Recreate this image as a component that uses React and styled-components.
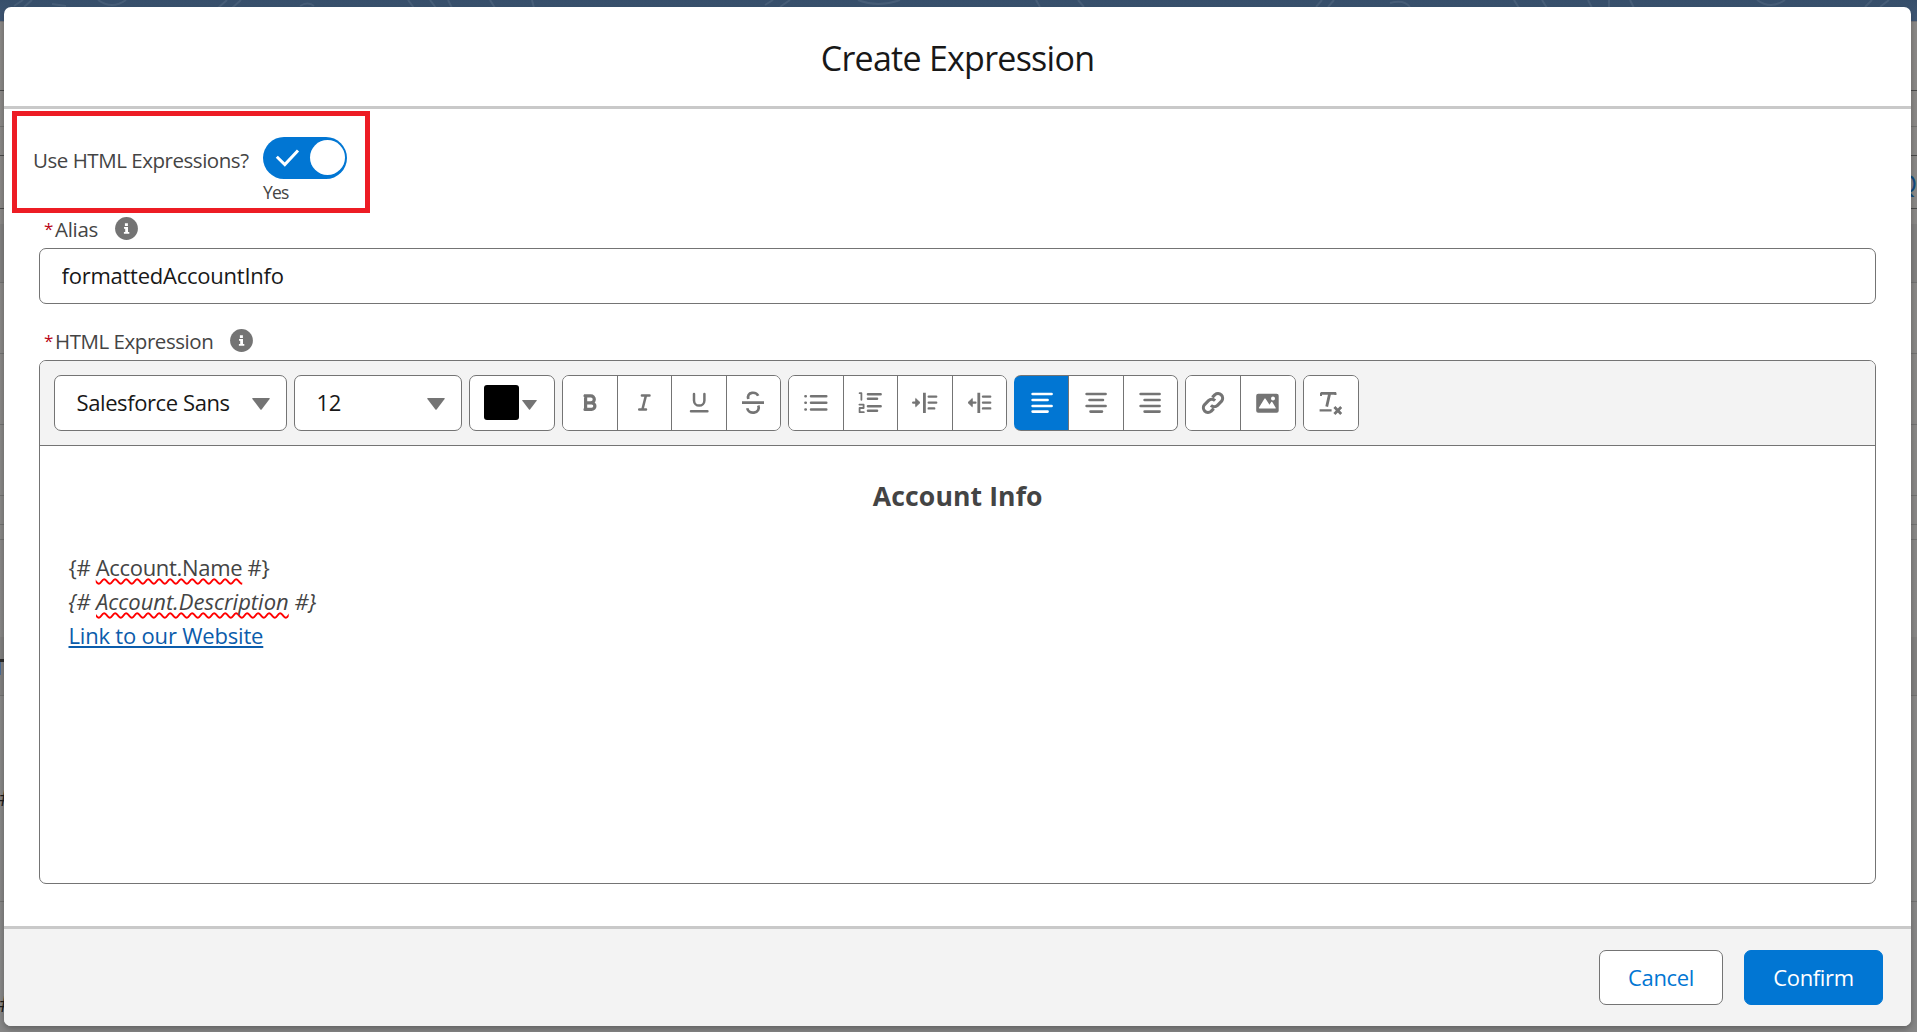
import React from "react";
import styled, { createGlobalStyle, css } from "styled-components";

const Global = createGlobalStyle`
  * { box-sizing: border-box; }
  html, body { margin: 0; padding: 0; }
  body {
    width: 100vw; height: 100vh; overflow: hidden;
    font-family: "Open Sans", "Noto Sans", sans-serif;
    color: #444; background: #8b8b8a;
  }
  button, input { font-family: inherit; margin: 0; }
`;

const Page = styled.div`
  position: relative;
  height: 100vh;
  overflow: hidden;
`;
const PageBehind = styled.div`
  display: flex;
  flex-direction: column;
  height: 100%;
  background: linear-gradient(#8b8987, #878787);
`;
const BrandStrip = styled.div`
  flex: none;
  height: 22px;
  background: linear-gradient(#364e6a, #405876);
  border-bottom: 1px solid #76767a;
  svg { display: block; }
`;
const Band = styled.div`
  flex: none;
  display: flex;
  justify-content: space-between;
  align-items: flex-end;
  height: ${(p) => p.$h}px;
  border-bottom: 1px solid ${(p) => p.$color || "#737372"};
  background: ${(p) => (p.$shade ? "#828180" : "transparent")};
  white-space: nowrap;
`;
const TabMark = styled.span`
  align-self: flex-start;
  width: 4px;
  height: 16px;
  border-top: 3px solid #2b2b2b;
  background: linear-gradient(90deg, #4a6a94 1px, transparent 1px);
`;
const Hash = styled.span`
  font-size: 21px;
  line-height: 20px;
  color: #1b1b1b;
  margin-left: -1px;
  padding-bottom: ${(p) => p.$up}px;
`;
const Peek = styled.span`
  margin-left: auto;
  margin-right: 0;
  padding-bottom: 12px;
  font-size: 25px;
  line-height: 26px;
  color: #0f4a80;
`;

const Modal = styled.section`
  position: absolute;
  left: 4px;
  top: 7px;
  width: 1907px;
  height: 1019px;
  display: flex;
  flex-direction: column;
  border-radius: 7px;
  overflow: hidden;
  background: #fff;
  box-shadow: 0 3px 6px rgba(0, 0, 0, 0.28);
`;
const Header = styled.header`
  flex: none;
  height: 102px;
  padding-top: 2px;
  border-bottom: 3px solid #c9c9c9;
  display: flex;
  align-items: center;
  justify-content: center;
`;
const Title = styled.h2`
  margin: 0;
  font-size: 34px;
  font-weight: 400;
  line-height: 44px;
  letter-spacing: -0.74px;
  color: #181818;
`;
const Body = styled.div`
  flex: 1;
  padding: 2px 35px 0 8px;
  display: flex;
  flex-direction: column;
`;
const Highlight = styled.div`
  flex: none;
  width: 358px;
  height: 102px;
  border: 5px solid #ed1c24;
  padding: 21px 0 0 16px;
  display: flex;
  align-items: flex-start;
`;
const ToggleLabel = styled.span`
  width: 230px;
  font-size: 20.5px;
  line-height: 28px;
  padding-top: 9px;
  letter-spacing: -0.46px;
  white-space: nowrap;
`;
const ToggleColumn = styled.div`
  display: flex;
  flex-direction: column;
`;
const Switch = styled.span`
  width: 84px;
  height: 42px;
  border-radius: 21px;
  background: #0176d3;
  display: flex;
  align-items: center;
  justify-content: space-between;
  padding: 0 2px 0 12px;
`;
const Knob = styled.span`
  width: 35px;
  height: 35px;
  border-radius: 50%;
  background: #fff;
  margin-bottom: 1px;
`;
const State = styled.span`
  font-size: 17.5px;
  line-height: 24px;
  margin-top: 1px;
  letter-spacing: -0.8px;
`;
const Fields = styled.div`
  padding-left: 27px;
  display: flex;
  flex-direction: column;
`;
const LabelRow = styled.div`
  display: flex;
  align-items: center;
  height: ${(p) => p.$h}px;
  padding: ${(p) => p.$pt}px 0 ${(p) => p.$pb || 0}px 5px;
  svg { margin-left: ${(p) => p.$gap}px; margin-top: -1px; }
`;
const Star = styled.abbr`
  width: 11px;
  font-size: 17px;
  line-height: 28px;
  color: #ba0517;
`;
const Label = styled.label`
  font-size: 20.5px;
  line-height: 28px;
  letter-spacing: ${(p) => p.$ls}px;
`;
const TextInput = styled.input`
  height: 56px;
  width: 1837px;
  border: 1px solid #747474;
  border-radius: 7px;
  padding: 0 22px 2px 21.5px;
  font-size: 22px;
  letter-spacing: -0.24px;
  color: #181818;
  outline: none;
`;
const Editor = styled.div`
  width: 1837px;
  height: 524px;
  border: 1px solid #747474;
  border-radius: 7px;
  overflow: hidden;
`;
const Toolbar = styled.div`
  display: flex;
  gap: 7px;
  height: 85px;
  padding: 14px;
  background: #f3f3f3;
  border-bottom: 1px solid #747474;
`;
const box = css`
  height: 56px;
  border: 1px solid #747474;
  border-radius: 7px;
  background: #fff;
  display: flex;
  overflow: hidden;
`;
const Select = styled.div`
  ${box}
  width: ${(p) => p.$w}px;
  align-items: center;
  justify-content: space-between;
  padding: 0 16px 2px 21.5px;
  font-size: 22px;
  letter-spacing: -0.4px;
  color: #181818;
  svg { margin-top: 4px; }
`;
const ColorPick = styled.div`
  ${box}
  width: 86px;
  align-items: center;
  padding-left: 14px;
  gap: 3px;
  svg { margin-top: 3px; }
`;
const Swatch = styled.span`
  width: 35px;
  height: 35px;
  margin-bottom: 1px;
  border-radius: 3px;
  background: #000;
`;
const Group = styled.div`
  ${box}
  width: ${(p) => p.$w}px;
  ${(p) => p.$activeFirst && "border-left-color: #0176d3; background: linear-gradient(90deg, #0176d3 50px, #fff 50px);"}
`;
const Tool = styled.button`
  flex: 1;
  display: flex;
  align-items: center;
  justify-content: center;
  padding: 0;
  border: 0;
  border-left: ${(p) => (p.$first ? 0 : 1)}px solid #747474;
  background: ${(p) => (p.$active ? "#0176d3" : "#fff")};
  color: ${(p) => (p.$active ? "#fff" : "#747474")};
  ${(p) => p.$active && "margin: -1px 0;"}
`;
const Content = styled.div`
  padding: 33px 28px 33px 28.5px;
  font-size: 22px;
  line-height: 34px;
`;
const Heading = styled.h3`
  margin: 0 0 37px;
  text-align: center;
  font-size: 26.6px;
  line-height: 34px;
  font-weight: 700;
  letter-spacing: 0.1px;
`;
const Line = styled.div`
  height: 34px;
  letter-spacing: ${(p) => p.$ls}px;
  font-style: ${(p) => (p.$italic ? "italic" : "normal")};
`;
const Misspelt = styled.span`
  text-decoration: underline wavy #f00 1.5px;
  text-decoration-skip-ink: none;
  text-underline-offset: 2px;
`;
const Link = styled.a`
  color: #0b5cab;
  text-decoration: underline 2px;
  text-decoration-skip-ink: none;
  text-underline-offset: 2px;
`;
const Footer = styled.footer`
  flex: none;
  height: 100px;
  background: #f3f3f3;
  border-top: 3px solid #c9c9c9;
  padding: 21px 28px 0 0;
  display: flex;
  justify-content: flex-end;
  gap: 21px;
`;
const Button = styled.button`
  width: ${(p) => p.$w}px;
  height: 55px;
  border-radius: 7px;
  border: 1px solid ${(p) => (p.$brand ? "#0176d3" : "#747474")};
  background: ${(p) => (p.$brand ? "#0176d3" : "#fff")};
  color: ${(p) => (p.$brand ? "#fff" : "#0176d3")};
  font-size: 22px;
  padding: 0 0 2px;
  letter-spacing: -0.35px;
`;

const Info = () => (
  <svg width="23" height="23" viewBox="0 0 23 23">
    <circle cx="11.5" cy="11.5" r="11.4" fill="#747474" />
    <path fill="#fff" d="M9.900 6.200h3v2.900h-3zM9 10h4v5h1.300v1.800H8.900V15h1.300v-3.200H9z" />
  </svg>
);
const Caret = ({ w = 18, h = 12 }) => (
  <svg width={w} height={h} viewBox="0 0 18 12">
    <path d="M0.6 0H17.4Q18 .2 17.6 1L9.6 11.4Q9 12 8.4 11.4L.4 1Q0 .2 .6 0z" fill="#747474" />
  </svg>
);
const Ico = ({ children }) => (
  <svg width="26" height="26" viewBox="0 0 26 26" fill="none" stroke="currentColor" strokeWidth="2.3" strokeLinecap="round" strokeLinejoin="round">
    {children}
  </svg>
);

const icons = {
  bold: <path strokeWidth="3.2" strokeLinejoin="miter" d="M8.6 5.8h5.2a3.2 3.2 0 0 1 0 7H8.6zM8.6 12.8h6a3.3 3.3 0 0 1 0 6.600h-6zM8 5.8h1M8 19.4h1" />,
  italic: <path strokeWidth="2.5" d="M10.900 5.600h7.600M8.200 19.500h6.800M14.900 5.600L11.400 19.500" />,
  underline: <path strokeWidth="2.5" d="M8 4v6.400a5 5 0 0 0 10.400 0V4M5 21.200h16.400" />,
  strike: <path strokeWidth="2.700" strokeLinecap="butt" d="M2 12.600h22M18.200 5.800C17 3.200 14 2.600 12 2.800C8.800 3.200 7.400 5.800 8.300 9M7.200 18.300C7.900 21.400 10.900 23 14 22.600C18 22 19.600 18.800 18.300 15.600" />,
  bullets: <path strokeWidth="2.500" d="M8 6.300h15.300M8 12.800h15.300M8 19.400h15.300M2.400 6.300h.4M2.400 12.800h.4M2.400 19.400h.4" />,
  numbers: (
    <>
      <path strokeWidth="2.600" d="M11 4.300h12.600M11 8.800h9M11 16.200h12.600M11 20.800h9" />
      <path strokeWidth="1.800" d="M2.600 3.200h1.800v6.600M2.400 14.600h4.200v3.400H2.600v4.200h4.200" />
    </>
  ),
  indent: (
    <>
      <path strokeLinecap="butt" strokeWidth="2.800" d="M12.400 2.800v20.200" />
      <path strokeWidth="2.400" d="M16.700 6.600h7.500M16.700 12.600h7.500M16.700 18.400h5.500M1.200 12.600h3.600" />
      <path fill="currentColor" strokeWidth="1" d="M4 8.800l4 3.800-4 3.800z" />
    </>
  ),
  outdent: (
    <>
      <path strokeLinecap="butt" strokeWidth="2.800" d="M12.800 2.800v20.200" />
      <path strokeWidth="2.400" d="M17 6.600h7.200M17 12.600h7.200M17 18.400h7.200M5.800 12.600h3.600" />
      <path fill="currentColor" strokeWidth="1" d="M6 8.800l-4 3.800 4 3.800z" />
    </>
  ),
  left: <path strokeWidth="2.600" d="M3.600 4h19M3.600 10h15M3.600 16h19M3.600 21.600h15" />,
  center: <path strokeWidth="2.600" d="M3.600 4h19M6.500 10h13.500M3.600 16h19M7.500 21.600h11.500" />,
  right: <path strokeWidth="2.600" d="M3.600 4h19M7.600 10h15M3.600 16h19M7.600 21.600h15" />,
  link: (
    <path strokeWidth="3.100" strokeLinecap="butt" d="M12.300 7.300l2.700-2.700a4.700 4.700 0 0 1 6.600 6.600l-4.100 4.100a4.700 4.700 0 0 1-6.600 0M13.700 18.700l-2.700 2.700a4.700 4.700 0 0 1-6.600-6.600l4.100-4.100a4.700 4.700 0 0 1 6.600 0" />
  ),
  image: (
    <path transform="translate(-.8 0)" stroke="none" fill="currentColor" fillRule="evenodd" d="M4 3.800h18.500q2 0 2 2v15q0 2-2 2H4q-2 0-2-2v-15q0-2 2-2zM5.200 18.600h15.800c.5 0 .7-.5.500-.9l-3.400-5.600c-.3-.5-.8-.5-1.100 0l-1.700 2.600-3.900-5.900c-.3-.5-.9-.5-1.200 0L4.700 17.700c-.3.500 0 .9.500.9zM16.800 8.400a2 2 0 1 0 4 0 2 2 0 1 0-4 0z" />
  ),
  clear: (
    <>
      <path strokeWidth="2.800" strokeLinecap="butt" d="M2.600 3.400h15.600M11.700 3.400L8.700 16.600" />
      <path strokeWidth="2" strokeLinecap="butt" d="M3 3v3M17.400 3v2" />
      <path strokeWidth="2.300" strokeLinecap="butt" d="M1.600 20.400h12" />
      <path strokeWidth="2.800" strokeLinecap="butt" d="M16.400 17l6.800 7M23.200 17l-6.800 7" />
    </>
  ),
};

const groups = [
  { w: 219, items: ["bold", "italic", "underline", "strike"] },
  { w: 219, items: ["bullets", "numbers", "indent", "outdent"] },
  { w: 164, items: ["left", "center", "right"], active: "left" },
  { w: 111, items: ["link", "image"] },
  { w: 56, items: ["clear"] },
];

const bands = [
  { h: 69, color: "#4a4a4a" },
  { h: 36 },
  { h: 29, color: "#4a4a4a" },
  { h: 53, color: "#4a4a4a", peek: true },
  { h: 16, color: "#828180" },
  { h: 58, shade: true },
  { h: 71 },
  { h: 71 },
  { h: 71 },
  { h: 29 },
  { h: 15 },
  { h: 98, color: "#828180" },
  { h: 21, shade: true, color: "#828180" },
  { h: 37, shade: true, tab: true },
  { h: 206, hash: 93 },
  { h: 131, hash: 18, color: "#878787" },
];

export default function App() {
  return (
    <>
      <Global />
      <Page>
        <PageBehind>
          <BrandStrip>
            <svg width="1917" height="21" fill="none" stroke="#5b7088" strokeWidth="2" opacity=".45">
              <path d="M14 6l9-6M24 7l8-7M52 4l14 2M98 0q14 10 28 0M218 8l9-8M232 8l9-8M300 6q8-5 14 0M408 0l6 8M430 0l6 8M448 0l4 8M490 0l5 8M532 0l2 8M765 5l8-5M780 7l10-7M858 0q20 8 42 0M1036 0l4 7M1078 0l6 7M1316 7l6-7M1328 7l6-7M1390 3q14-4 20 4M1514 0l5 8M1542 0l5 8M1588 0l4 8M1609 0v8M1630 0l4 8M1757 0q14 10 28 0M1865 7l7-7M1880 7l9-7" />
            </svg>
          </BrandStrip>
          {bands.map((b, i) => (
            <Band key={i} $h={b.h} $shade={b.shade} $color={b.color}>
              {b.tab && <TabMark />}
              {b.hash && <Hash $up={b.hash}>#</Hash>}
              {b.peek && <Peek>Q</Peek>}
            </Band>
          ))}
        </PageBehind>
        <Modal>
          <Header>
            <Title>Create Expression</Title>
          </Header>
          <Body>
            <Highlight>
              <ToggleLabel>Use HTML Expressions?</ToggleLabel>
              <ToggleColumn>
                <Switch>
                  <svg width="25" height="20" viewBox="0 0 25 20" fill="none" stroke="#fff" strokeWidth="3">
                    <path d="M1.800 8.700l8 7.800L23 2.500" />
                  </svg>
                  <Knob />
                </Switch>
                <State>Yes</State>
              </ToggleColumn>
            </Highlight>
            <Fields>
              <LabelRow $h={35} $pb={3} $pt={0} $gap={17}>
                <Star>*</Star>
                <Label $ls={-0.3}>Alias</Label>
                <Info />
              </LabelRow>
              <TextInput defaultValue="formattedAccountInfo" />
              <LabelRow $h={56} $pt={17} $gap={17}>
                <Star>*</Star>
                <Label $ls={-0.45}>HTML Expression</Label>
                <Info />
              </LabelRow>
              <Editor>
                <Toolbar>
                  <Select $w={233}>Salesforce Sans<Caret /></Select>
                  <Select $w={168}>12<Caret /></Select>
                  <ColorPick><Swatch /><Caret w={15} h={10} /></ColorPick>
                  {groups.map((g, i) => (
                    <Group key={i} $w={g.w} $activeFirst={!!g.active}>
                      {g.items.map((name, j) => (
                        <Tool key={name} $first={j === 0} $active={g.active === name}>
                          <Ico>{icons[name]}</Ico>
                        </Tool>
                      ))}
                    </Group>
                  ))}
                </Toolbar>
                <Content>
                  <Heading>Account Info</Heading>
                  <Line $ls={-0.32}>{"{# "}<Misspelt>Account.Name</Misspelt>{" #}"}</Line>
                  <Line $ls={0} $italic>{"{# "}<Misspelt>Account.Description</Misspelt>{" #}"}</Line>
                  <Line $ls={-0.19}><Link>Link to our Website</Link></Line>
                </Content>
              </Editor>
            </Fields>
          </Body>
          <Footer>
            <Button $w={124}>Cancel</Button>
            <Button $w={139} $brand>Confirm</Button>
          </Footer>
        </Modal>
      </Page>
    </>
  );
}
